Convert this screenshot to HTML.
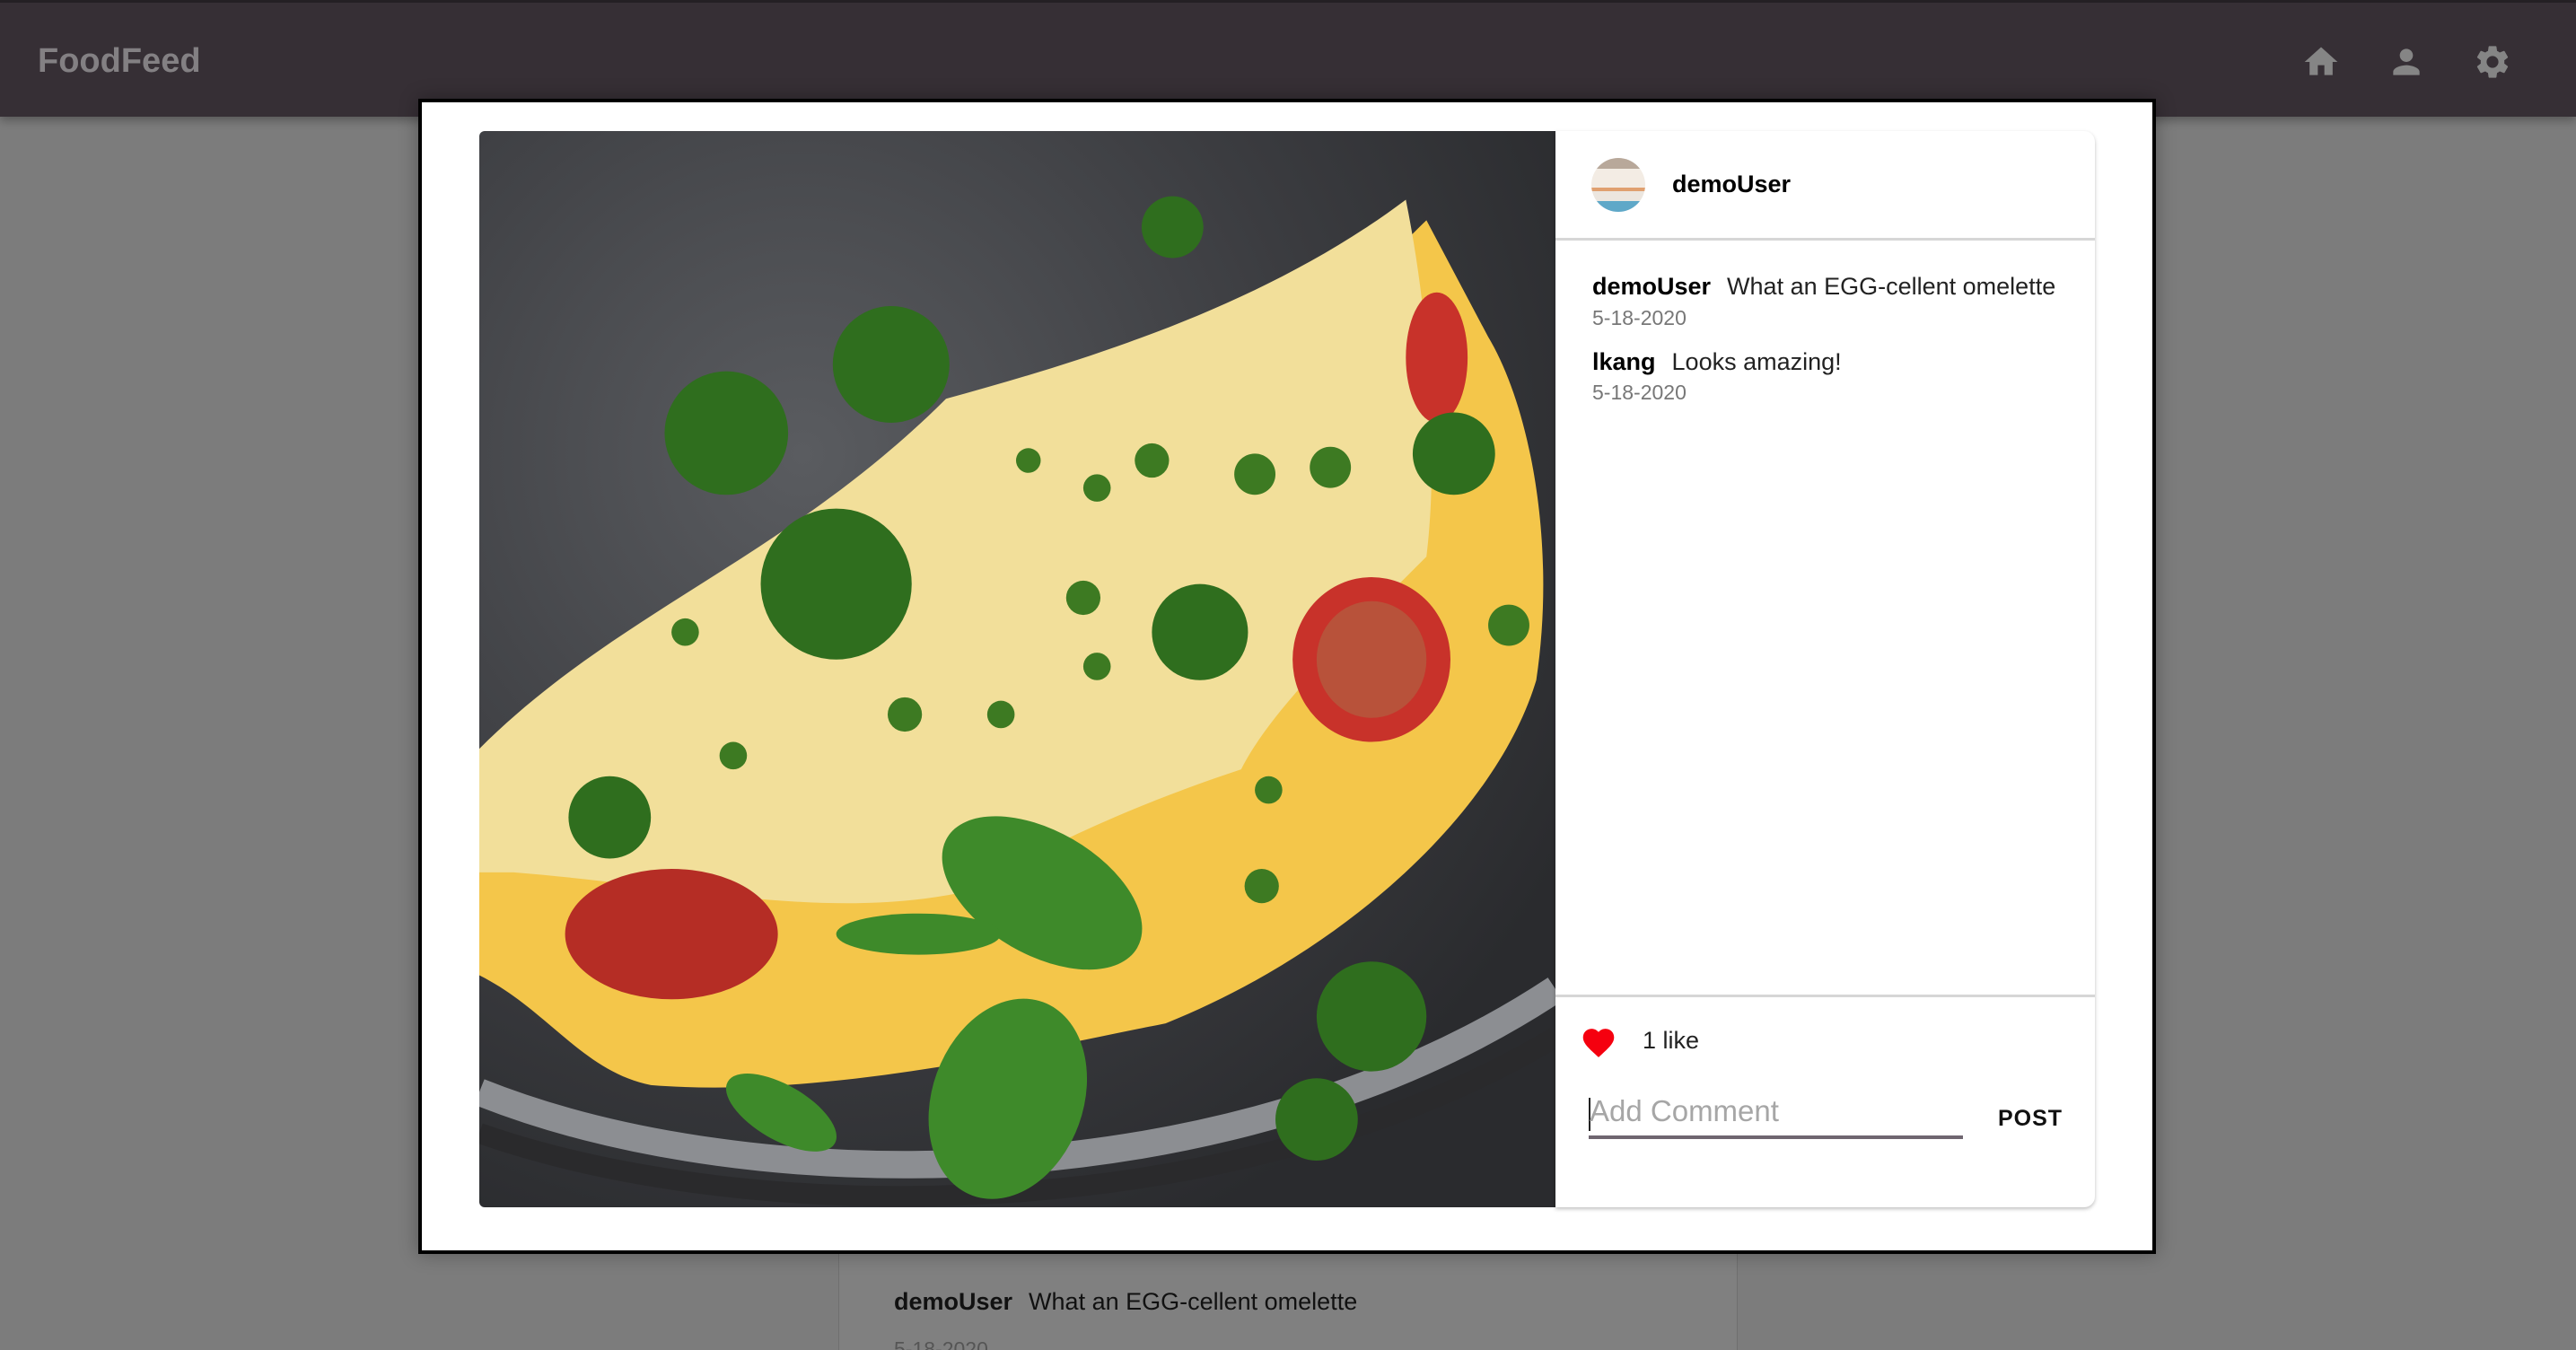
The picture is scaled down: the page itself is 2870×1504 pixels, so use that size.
<!DOCTYPE html>
<html><head><meta charset="utf-8"><style>
*{margin:0;padding:0;box-sizing:border-box}
html,body{width:2870px;height:1504px;overflow:hidden}
body{background:#7c7c7c;font-family:"Liberation Sans",sans-serif;position:relative}
.nav{position:absolute;left:0;top:0;width:2870px;height:130px;background:#362f35;border-top:3px solid #242024;box-shadow:0 4px 10px rgba(0,0,0,.3)}
.logo{position:absolute;left:42px;top:44px;font-size:38px;color:#838083;font-weight:bold}
.ic{position:absolute;top:44px;width:44px;height:44px;fill:#858585}
.bgcard{position:absolute;left:934px;top:1380px;width:1002px;height:124px;background:#808080;border-left:1px solid #6f6f6f;border-right:1px solid #6f6f6f}
.bgt{position:absolute;left:996px;top:1435px;font-size:27px;color:#111}
.bgd{position:absolute;left:996px;top:1490px;font-size:23px;color:#555}
.modal{position:absolute;left:466px;top:110px;width:1936px;height:1287px;background:#fff;border:4px solid #000;box-shadow:0 0 20px rgba(0,0,0,.3)}
.img{position:absolute;left:534px;top:146px;width:1199px;height:1199px;border-radius:6px 0 0 6px;overflow:hidden}
.panel{position:absolute;left:1733px;top:146px;width:601px;height:1199px;background:#fff;border-radius:0 12px 12px 0;box-shadow:0 2px 4px rgba(0,0,0,.25)}
.hline{position:absolute;left:0;width:601px;height:3px;background:#d6d6d6}
.av{position:absolute;left:40px;top:30px;width:60px;height:60px;border-radius:50%;background:linear-gradient(#b8a89a 0 20%,#f3ece4 20% 55%,#e0a070 55% 62%,#ece6df 62% 80%,#5fa8c8 80%)}
.name{position:absolute;left:130px;top:44px;font-size:27px;font-weight:bold;color:#000}
.c{position:absolute;left:41px;font-size:27px;color:#222;white-space:nowrap}
.c b{color:#000;margin-right:18px}
.d{position:absolute;left:41px;font-size:23px;color:#777}
</style></head><body>
<div class="nav">
<div class="logo">FoodFeed</div>
<svg class="ic" style="left:2564px" viewBox="0 0 24 24"><path d="M10 20v-6h4v6h5v-8h3L12 3 2 12h3v8z"/></svg>
<svg class="ic" style="left:2659px" viewBox="0 0 24 24"><path d="M12 12c2.21 0 4-1.79 4-4s-1.79-4-4-4-4 1.79-4 4 1.79 4 4 4zm0 2c-2.67 0-8 1.34-8 4v2h16v-2c0-2.660-5.330-4-8-4z"/></svg>
<svg class="ic" style="left:2755px" viewBox="0 0 24 24"><path d="M19.14 12.94c.04-.3.06-.61.06-.94 0-.32-.02-.64-.07-.94l2.03-1.580a.49.49 0 00.12-.61l-1.92-3.32a.488.488 0 00-.59-.22l-2.39.96c-.5-.38-1.03-.7-1.62-.94l-.36-2.54a.484.484 0 00-.48-.41h-3.84c-.24 0-.43.17-.47.41l-.36 2.54c-.59.24-1.13.57-1.62.94l-2.39-.96c-.22-.08-.47 0-.59.22L2.74 8.87c-.12.21-.08.47.12.61l2.03 1.58c-.05.3-.09.63-.09.94s.02.64.07.94l-2.03 1.58a.49.49 0 00-.12.61l1.92 3.32c.12.22.37.29.59.22l2.39-.96c.5.38 1.03.7 1.62.94l.36 2.54c.05.24.24.41.48.41h3.840c.24 0 .44-.17.47-.41l.36-2.54c.59-.24 1.13-.56 1.62-.94l2.39.96c.22.08.47 0 .59-.22l1.92-3.32c.12-.22.07-.47-.12-.61l-2.01-1.58zM12 15.6c-1.98 0-3.6-1.62-3.6-3.6s1.62-3.6 3.6-3.6 3.6 1.62 3.6 3.6-1.62 3.6-3.6 3.6z"/></svg>
</div>
<div class="bgcard"></div>
<div class="bgt"><b style="margin-right:18px">demoUser</b>What an EGG-cellent omelette</div>
<div class="bgd">5-18-2020</div>
<div class="modal"></div>
<div class="img"><svg width="1199" height="1199" viewBox="0 0 1568 1568">
<defs><radialGradient id="pg" cx="30%" cy="30%" r="80%"><stop offset="0" stop-color="#5a5c60"/><stop offset=".6" stop-color="#3b3c40"/><stop offset="1" stop-color="#2a2b2e"/></radialGradient></defs>
<rect width="1568" height="1568" fill="url(#pg)"/>
<path d="M0,1400 C400,1560 1100,1560 1568,1250" stroke="#8c8e92" stroke-width="40" fill="none"/>
<path d="M0,1460 C400,1600 1100,1600 1568,1320" stroke="#2a2a2c" stroke-width="30" fill="none"/>
<path d="M0,1060 L0,1230 C100,1280 150,1370 250,1390 C500,1410 800,1340 1000,1300 C1250,1200 1480,1000 1540,800 C1570,600 1530,400 1470,300 L1380,130 C1200,300 1000,700 0,1060 Z" fill="#f4c64a"/>
<path d="M0,900 C200,700 450,620 680,390 C900,330 1150,250 1350,100 C1390,300 1395,500 1380,620 C1250,750 1150,850 1110,930 C900,1000 800,1060 700,1110 C500,1150 300,1100 50,1080 L0,1080 Z" fill="#f2df9a"/>
<ellipse cx="1300" cy="770" rx="115" ry="120" fill="#c8322a"/>
<ellipse cx="1300" cy="770" rx="80" ry="85" fill="#b8523a"/>
<ellipse cx="280" cy="1170" rx="155" ry="95" fill="#b52d25"/>
<ellipse cx="1395" cy="330" rx="45" ry="95" fill="#c8322a"/>
<g fill="#2f6e1e"><circle cx="360" cy="440" r="90"/><circle cx="600" cy="340" r="85"/><circle cx="520" cy="660" r="110"/><circle cx="1420" cy="470" r="60"/><circle cx="190" cy="1000" r="60"/><circle cx="1010" cy="140" r="45"/><circle cx="1050" cy="730" r="70"/><circle cx="1300" cy="1290" r="80"/><circle cx="1220" cy="1440" r="60"/></g>
<g fill="#3e8a2a"><ellipse cx="820" cy="1110" rx="160" ry="90" transform="rotate(30 820 1110)"/><ellipse cx="770" cy="1410" rx="110" ry="150" transform="rotate(20 770 1410)"/><ellipse cx="440" cy="1430" rx="90" ry="40" transform="rotate(30 440 1430)"/><ellipse cx="640" cy="1170" rx="120" ry="30"/></g>
<g fill="#3d7a22"><circle cx="900" cy="520" r="20"/><circle cx="980" cy="480" r="25"/><circle cx="1130" cy="500" r="30"/><circle cx="1240" cy="490" r="30"/><circle cx="880" cy="680" r="25"/><circle cx="800" cy="480" r="18"/><circle cx="620" cy="850" r="25"/><circle cx="370" cy="910" r="20"/><circle cx="300" cy="730" r="20"/><circle cx="900" cy="780" r="20"/><circle cx="1140" cy="1100" r="25"/><circle cx="1500" cy="720" r="30"/><circle cx="1150" cy="960" r="20"/><circle cx="760" cy="850" r="20"/></g>
</svg></div>
<div class="panel">
<div class="av"></div>
<div class="name">demoUser</div>
<div class="hline" style="top:119px"></div>
<div class="c" style="top:158px"><b>demoUser</b>What an EGG-cellent omelette</div>
<div class="d" style="top:195px">5-18-2020</div>
<div class="c" style="top:242px"><b>lkang</b>Looks amazing!</div>
<div class="d" style="top:278px">5-18-2020</div>
<div class="hline" style="top:962px"></div>
<svg style="position:absolute;left:27px;top:995px" width="42" height="38" viewBox="0 0 24 22"><path fill="#f5000f" d="M12 21.35l-1.45-1.32C5.4 15.36 2 12.28 2 8.5 2 5.42 4.42 3 7.5 3c1.74 0 3.41.81 4.5 2.09C13.09 3.81 14.76 3 16.5 3 19.580 3 22 5.42 22 8.5c0 3.78-3.4 6.86-8.55 11.54L12 21.35z"/></svg>
<div class="c" style="top:998px;left:97px">1 like</div>
<div style="position:absolute;left:37px;top:1077px;width:2px;height:37px;background:#222"></div>
<div style="position:absolute;left:38px;top:1073px;font-size:33px;color:#a6a6a6">Add Comment</div>
<div style="position:absolute;left:37px;top:1119px;width:417px;height:4px;background:#6f6670"></div>
<div style="position:absolute;left:493px;top:1086px;font-size:25px;color:#111;font-weight:bold;letter-spacing:1px">POST</div>
</div>
</body></html>
